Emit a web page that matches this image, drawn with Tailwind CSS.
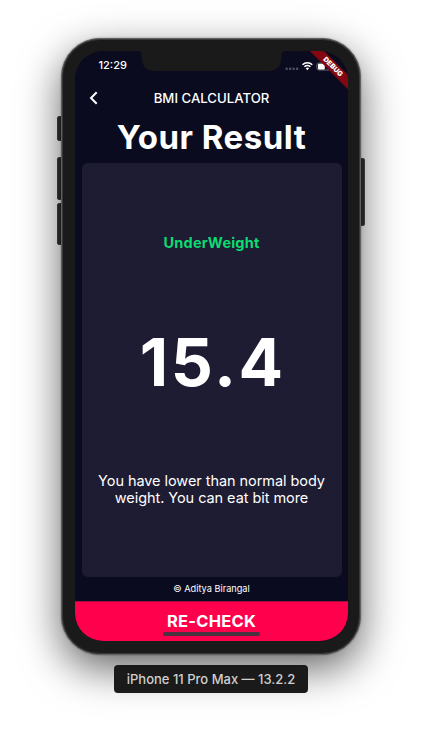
<!DOCTYPE html>
<html lang="en">
<head>
<meta charset="utf-8">
<title>BMI Calculator</title>
<script src="https://cdn.jsdelivr.net/npm/@tailwindcss/browser@4"></script>
</head>
<body class="bg-white overflow-hidden font-['Inter',sans-serif] text-white">
<main class="w-[422px] h-[729px] flex flex-col items-center pt-[38px]">
  <div class="relative w-[300px] h-[617px]">
    <div class="absolute -left-[4px] top-[78px] w-[8px] h-[25px] rounded-[2px] bg-[#303030] border border-[#444]"></div>
    <div class="absolute -left-[4px] top-[119px] w-[8px] h-[43px] rounded-[2px] bg-[#303030] border border-[#444]"></div>
    <div class="absolute -left-[4px] top-[165px] w-[8px] h-[42px] rounded-[2px] bg-[#303030] border border-[#444]"></div>
    <div class="absolute -right-[4px] top-[120px] w-[8px] h-[68px] rounded-[2px] bg-[#333] border border-[#4a4a4a]"></div>
    <div class="relative w-full h-full rounded-[39px] border-[1px] border-[#606060] bg-[#1a1a1a] pt-[12px] pl-[13px] shadow-[inset_0_0_0_1px_#383838,0_0_2px_rgba(0,0,0,0.4),0_14px_42px_rgba(0,0,0,0.6)]">
      <section class="relative w-[273px] h-[590px] rounded-[28px] overflow-hidden bg-[#0b0b20] flex flex-col">
        <div class="absolute left-[63px] top-0">
          <svg class="block" width="147" height="21" viewBox="0 0 147 21"><path d="M0 0h147q-3.500.5-3.500 4v2q-.5 14-14 14h-112q-13.500 0-14-14v-2q0-3.500-3.500-4z" fill="#1a1a1a"/></svg>
        </div>
        <header class="h-[29px] shrink-0 flex items-center justify-between pl-[23.500px] pr-[9px]">
          <span class="text-[11px] font-medium leading-[15px]">12:29</span>
          <span class="flex items-center">
            <svg width="54" height="12" viewBox="0 0 54 12">
              <g fill="#4b4b5c"><rect x="0.500" y="7.500" width="2.300" height="2.500" rx=".6"/><rect x="4" y="7.500" width="2.300" height="2.500" rx=".6"/><rect x="7.500" y="7.500" width="2.300" height="2.500" rx=".6"/><rect x="11" y="7.500" width="2.300" height="2.500" rx=".6"/></g>
              <g fill="none" stroke="#fff" stroke-width="1.500"><path d="M17.500 4.700a7 7 0 0 1 9.800 0"/><path d="M19.400 6.800a4.300 4.300 0 0 1 6 0"/></g>
              <path d="M20.700 8.300a2.600 2.600 0 0 1 3.400 0l-1.700 1.900z" fill="#fff"/>
              <rect x="31.900" y="3" width="16" height="7" rx="2" fill="none" stroke="#72727f" stroke-width=".9"/>
              <rect x="33" y="3.700" width="6.800" height="5.800" rx="1" fill="#fff"/>
            </svg>
          </span>
        </header>
        <nav class="h-[36px] mb-px shrink-0 grid grid-cols-[40px_1fr_40px] items-center">
          <svg class="ml-[14px]" width="9" height="14" viewBox="0 0 9 14"><path d="M7.700 1.200L2 7l5.700 5.800" fill="none" stroke="#fff" stroke-width="2"/></svg>
          <h1 class="text-center text-[13.200px] font-medium leading-[18px] whitespace-nowrap">BMI CALCULATOR</h1>
        </nav>
        <h2 class="h-[40px] mb-[6px] shrink-0 text-center text-[33px] leading-[40px] tracking-[0.5px] font-bold whitespace-nowrap">Your Result</h2>
        <article class="mx-[6.500px] h-[414px] shrink-0 rounded-[6px] bg-[#1e1c32] pt-[71px] flex flex-col items-center text-center">
          <p class="text-[14.500px] leading-[18px] tracking-[0.2px] font-bold text-[#0ddb72]">UnderWeight</p>
          <p class="mt-[70px] pl-[2.500px] text-[66px] leading-[80px] tracking-[2.500px] font-bold">15.4</p>
          <p class="mt-[70px] text-[14.500px] leading-[17px] tracking-[-0.060px] whitespace-nowrap">You have lower than normal body<br>weight. You can eat bit more</p>
        </article>
        <p class="h-[24px] shrink-0 text-center text-[9.200px] leading-[24px]">© Aditya Birangal</p>
        <button class="relative w-full flex-1 bg-[#ff014c] border-t border-[#a80a42] text-center text-[16.500px] tracking-[0.250px] font-bold leading-[39px]">RE-CHECK
          <span class="absolute left-[88px] bottom-[5px] w-[97px] h-[4px] rounded-full bg-[#483541]"></span>
        </button>
        <div class="absolute top-[10.500px] -right-[35px] w-[100px] h-[9.500px] rotate-45 bg-[#820711] flex items-center justify-center text-[7px] leading-none font-black">DEBUG</div>
      </section>
    </div>
  </div>
  <div class="relative mt-[10px] w-[194px] h-[28px] rounded-[4px] bg-[#1a1a1a] text-[#cfcfcf] text-center text-[13px] leading-[28px] font-medium whitespace-nowrap">iPhone 11 Pro Max — 13.2.2</div>
</main>
</body>
</html>
